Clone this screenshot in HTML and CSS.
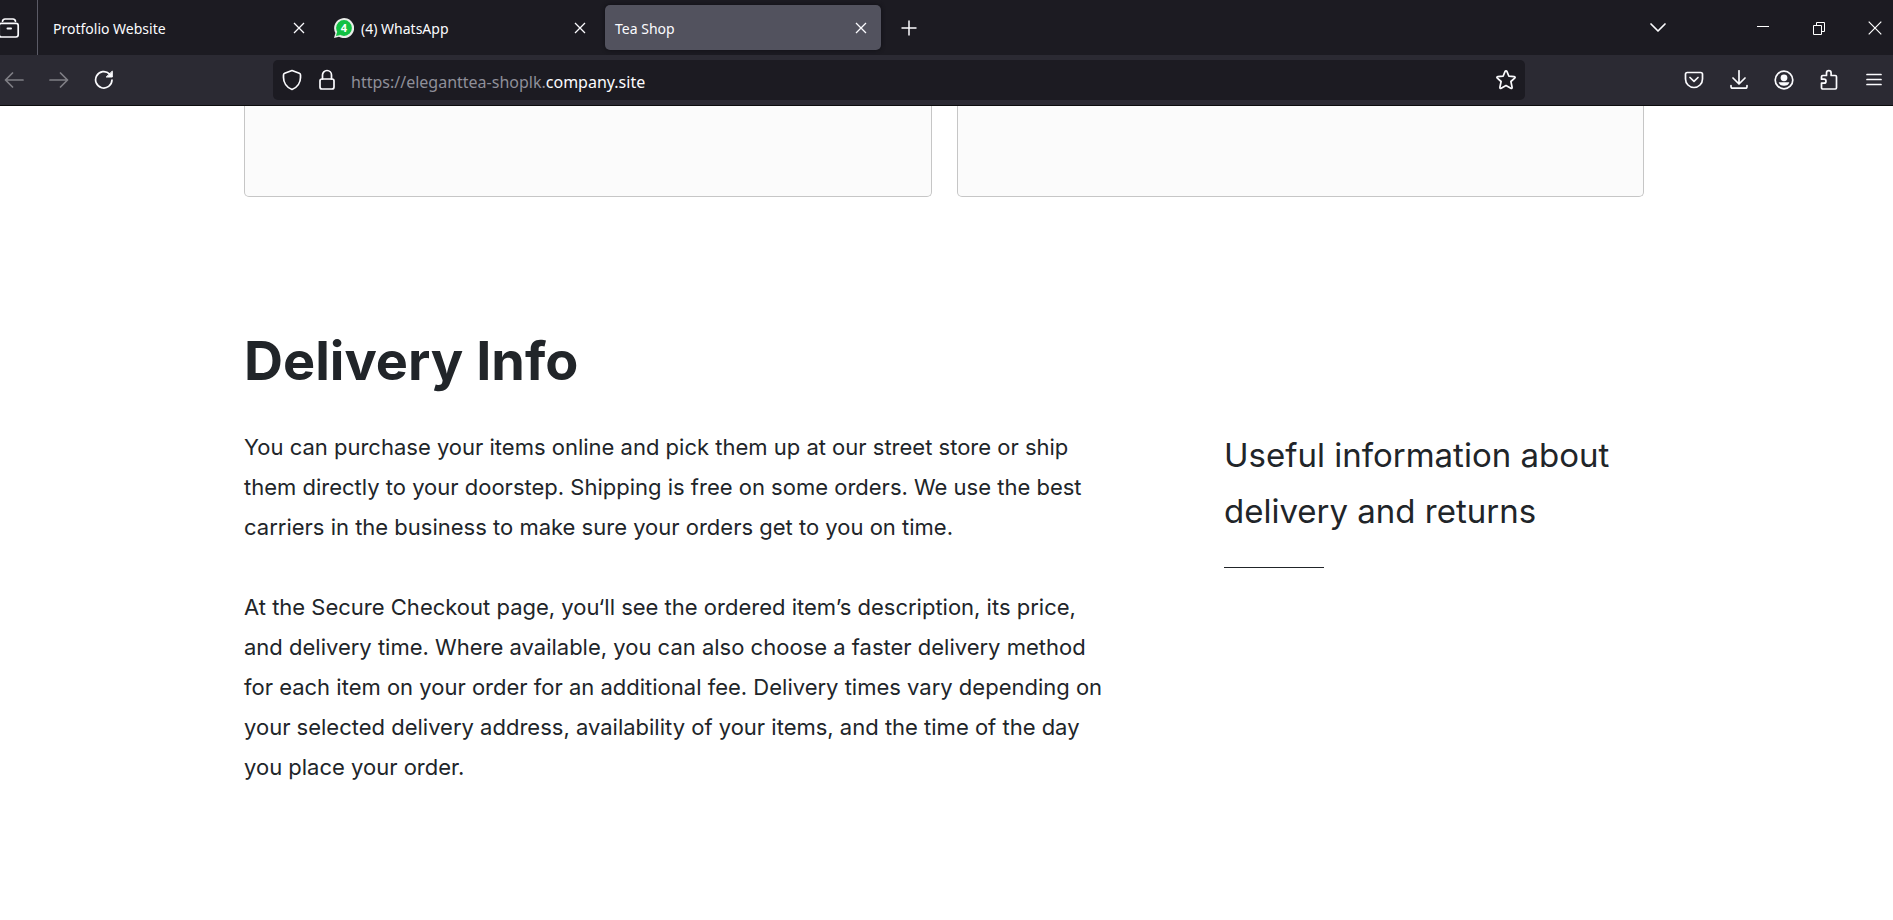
FILE: index.html
```html
<!DOCTYPE html>
<html lang="en">
<head>
<meta charset="utf-8">
<title>Tea Shop</title>
<link rel="stylesheet" href="styles.css">
</head>
<body>
<header class="browser">
  <div class="tabbar">
    <button class="view-button" aria-label="Recent browsing">
      <svg width="20" height="22" viewBox="0 0 20 22" fill="none" stroke="#fbfbfe" stroke-width="1.7" stroke-linecap="round"><path d="M2.500 4.200Q3 2 5 2H13Q15 2 15.500 4.200"/><rect x="-.8" y="6.300" width="19" height="13.700" rx="2.200"/><path d="M7.500 11.500H11" stroke-width="2"/></svg>
    </button>
    <div class="tabs">
      <div class="tab">
        <span class="tab-label">Protfolio Website</span>
        <button class="tab-close" aria-label="Close Protfolio Website"><svg width="12" height="12" viewBox="0 0 12 12"><path d="M1 1L11 11M11 1L1 11"/></svg></button>
      </div>
      <div class="tab">
        <svg class="favicon" width="20" height="20" viewBox="0 0 20 20"><path d="M0 20L1.400 15A10 10 0 1 1 5 18.700Z" fill="#e9ede9"/><circle cx="10" cy="10" r="7.900" fill="#12c143"/><path d="M2 18L3.200 13.500L6.500 17Z" fill="#12c143"/><text x="10" y="14" text-anchor="middle" class="favicon-count">4</text></svg>
        <span class="tab-label">(4) WhatsApp</span>
        <button class="tab-close" aria-label="Close WhatsApp"><svg width="12" height="12" viewBox="0 0 12 12"><path d="M1 1L11 11M11 1L1 11"/></svg></button>
      </div>
      <div class="tab tab-selected">
        <span class="tab-label">Tea Shop</span>
        <button class="tab-close" aria-label="Close Tea Shop"><svg width="12" height="12" viewBox="0 0 12 12"><path d="M1 1L11 11M11 1L1 11"/></svg></button>
      </div>
    </div>
    <button class="new-tab" aria-label="New tab"><svg width="16" height="16" viewBox="0 0 16 16" fill="none" stroke="#fbfbfe" stroke-width="1.500"><path d="M8 .5V15.500M.5 8H15.500"/></svg></button>
    <button class="window-button all-tabs" aria-label="List all tabs"><svg width="18" height="12" viewBox="0 0 18 12" fill="none" stroke="#fbfbfe" stroke-width="1.700" stroke-linecap="round" stroke-linejoin="round"><path d="M2 2L9 9L16 2"/></svg></button>
    <div class="window-buttons">
      <button class="window-button" aria-label="Minimize"><svg width="12" height="14" viewBox="0 0 12 14" fill="none" stroke="#fff"><path d="M0 5.500H12"/></svg></button>
      <button class="window-button" aria-label="Restore"><svg width="14" height="14" viewBox="0 0 14 14" fill="none" stroke="#fff"><path d="M1.500 4.500H9.500V13.500H1.500ZM4.500 4V1.500H12.500V10.500H10"/></svg></button>
      <button class="window-button" aria-label="Close window"><svg width="14" height="14" viewBox="0 0 14 14" fill="none" stroke="#fff" stroke-width="1.200"><path d="M.7 .7L13.300 13.300M13.300 .7L.7 13.300"/></svg></button>
    </div>
  </div>
  <div class="toolbar">
    <nav class="nav-buttons" aria-label="Navigation">
      <button class="tool" aria-label="Back" disabled><svg width="20" height="20" viewBox="0 0 20 20"><path d="M19 10H2M8.500 3L1.500 10L8.500 17"/></svg></button>
      <button class="tool" aria-label="Forward" disabled><svg width="20" height="20" viewBox="0 0 20 20"><path d="M1 10H18M11.500 3L18.500 10L11.500 17"/></svg></button>
      <button class="tool" aria-label="Reload"><svg width="20" height="20" viewBox="0 0 20 20"><path d="M18 10A8.200 8.200 0 1 1 15.500 3.900"/><path d="M18.300 1.500V7H12.600Z" fill="#fbfbfe" stroke-width="1"/></svg></button>
    </nav>
    <div class="urlbar">
      <button class="url-icon" aria-label="Tracking protection"><svg width="20" height="22" viewBox="0 0 20 22"><path d="M10 1.500L17.300 4.300Q18.500 4.800 18.500 6V8.500C18.500 13.500 15.500 18.500 10 20.500C4.500 18.500 1.500 13.500 1.500 8.500V6Q1.500 4.800 2.700 4.300Z"/></svg></button>
      <button class="url-icon" aria-label="Connection secure"><svg width="18" height="22" viewBox="0 0 18 22"><rect x="2" y="10" width="14" height="10" rx="2"/><path d="M4.500 10V6A4.500 4.500 0 0 1 13.500 6V10"/></svg></button>
      <div class="url" tabindex="0" role="textbox" aria-label="Address">https://eleganttea-shoplk.<span class="domain">company.site</span></div>
      <button class="url-icon" aria-label="Bookmark this page"><svg width="22" height="22" viewBox="0 0 22 22"><path d="M11 1.900Q11.700 1.900 12 2.600L13.900 7.200L19.200 7.700Q20.800 8 19.700 9.100L15.900 12.500L17.100 18.200Q17.200 19.900 15.800 19.300L11 16.500L6.200 19.300Q4.800 19.900 4.900 18.200L6.100 12.500L2.300 9.100Q1.200 8 2.800 7.700L8.100 7.200L10 2.600Q10.300 1.900 11 1.900Z"/></svg></button>
    </div>
    <div class="tools">
      <button class="tool" aria-label="Save to Pocket"><svg width="20" height="20" viewBox="0 0 20 20"><path d="M3.300 2.500H16.700Q18.500 2.500 18.500 4.300V9A8.500 8.500 0 0 1 1.500 9V4.300Q1.500 2.500 3.300 2.500ZM6 7.500L10 11.300L14 7.500"/></svg></button>
      <button class="tool" aria-label="Downloads"><svg width="20" height="20" viewBox="0 0 20 20"><path d="M10 .8V13.500M4 8L10 14L16 8M2 15.500V16.500Q2 18.200 3.700 18.200H16.300Q18 18.200 18 16.500V15.500"/></svg></button>
      <button class="tool" aria-label="Account"><svg width="20" height="20" viewBox="0 0 20 20"><circle cx="10" cy="10" r="8.800"/><circle cx="10" cy="7.800" r="3.400" fill="#fbfbfe" stroke="none"/><path d="M4.700 12.200H15.300Q14.500 15.800 10 15.800T4.700 12.200Z" fill="#fbfbfe" stroke="none"/></svg></button>
      <button class="tool" aria-label="Extensions"><svg width="20" height="22" viewBox="0 0 20 22"><path d="M3.800 6.500H7.500V3.900A2.300 2.300 0 0 1 12.100 3.900V6.500H16.300Q17.500 6.500 17.500 7.700V18.800Q17.500 20 16.300 20H3.800Q2.500 20 2.500 18.800V14.200H5A2 2 0 0 0 5 10.200H2.500V7.700Q2.500 6.500 3.800 6.500Z"/></svg></button>
      <button class="tool" aria-label="Menu"><svg width="16" height="14" viewBox="0 0 16 14"><path d="M1 1.500H15M1 6.500H15M1 11.500H15"/></svg></button>
    </div>
  </div>
</header>
<main class="page">
  <section class="cards" aria-label="Highlights">
    <div class="card"></div>
    <div class="card"></div>
  </section>
  <section class="delivery">
    <h1 class="title">Delivery Info</h1>
    <div class="columns">
      <div class="copy">
        <p>You can purchase your items online and pick them up at our street store or ship<br>them directly to your doorstep. Shipping is free on some orders. We use the best<br>carriers in the business to make sure your orders get to you on time.</p>
        <p>At the Secure Checkout page, you‘ll see the ordered item’s description, its price,<br>and delivery time. Where available, you can also choose a faster delivery method<br>for each item on your order for an additional fee. Delivery times vary depending on<br>your selected delivery address, availability of your items, and the time of the day<br>you place your order.</p>
      </div>
      <aside class="summary">
        <h2 class="subtitle">Useful information about<br>delivery and returns</h2>
        <hr class="rule">
      </aside>
    </div>
  </section>
</main>
</body>
</html>
```

FILE: styles.css
```css
* { box-sizing: border-box; }

body {
  margin: 0;
  background: #fff;
  color: #212529;
  font-family: Inter, "Liberation Sans", sans-serif;
  overflow-x: hidden;
}

button {
  display: flex;
  align-items: center;
  justify-content: center;
  flex: none;
  padding: 0;
  border: 0;
  background: none;
}

.browser {
  color: #fbfbfe;
  font-family: "Noto Sans", "Open Sans", sans-serif;
}

.tabbar {
  display: flex;
  align-items: center;
  height: 55px;
  background: #1c1b22;
}

.view-button {
  width: 38px;
  height: 55px;
  justify-content: flex-start;
  border-right: 1px solid #5b5b66;
}

.tabs {
  display: flex;
  gap: 5px;
  margin-left: 5px;
}

.tab {
  display: flex;
  align-items: center;
  gap: 7px;
  width: 276px;
  height: 45px;
  padding: 0 10px;
  border-radius: 5px;
  font-size: 14px;
}

.tab-selected {
  background: #52525e;
  box-shadow: 0 0 4px #0f0f14;
}

.tab-label {
  flex: 1;
  padding-top: 2px;
}

.favicon-count {
  fill: #fff;
  font-size: 11px;
  font-weight: 700;
}

.tab-close {
  width: 20px;
  height: 20px;
}

.tab-close svg {
  fill: none;
  stroke: #fbfbfe;
  stroke-width: 1.3;
}

.new-tab {
  width: 36px;
  height: 36px;
  margin-left: 10px;
}

.window-buttons {
  display: flex;
  gap: 20px;
}

.window-button {
  width: 36px;
  height: 36px;
}

.all-tabs {
  margin-left: auto;
  margin-right: 69px;
}

.toolbar {
  display: flex;
  align-items: center;
  height: 51px;
  border-bottom: 1px solid #0c0c0d;
  background: #2b2a33;
}

.nav-buttons, .tools {
  display: flex;
  gap: 7px;
}

.nav-buttons { margin-left: -5px; }

.tool {
  width: 38px;
  height: 38px;
}

.tool svg, .url-icon svg {
  fill: none;
  stroke: #fbfbfe;
  stroke-width: 1.7;
  stroke-linecap: round;
  stroke-linejoin: round;
}

.tool:disabled { opacity: 0.4; }

.urlbar {
  display: flex;
  flex: 1;
  align-items: center;
  height: 40px;
  margin: 0 150px;
  padding: 0 8px;
  border-radius: 5px;
  background: #1c1b22;
}

.url-icon {
  width: 22px;
  height: 30px;
  margin-right: 13px;
}

.url-icon:last-child { margin-right: 0; }

.url {
  flex: 1;
  padding-top: 4px;
  color: #8f8f99;
  font-size: 16px;
}

.domain { color: #fbfbfe; }

.page { padding: 0 249px 0 244px; }

.cards {
  display: grid;
  grid-template-columns: 1fr 1fr;
  gap: 25px;
}

.card {
  height: 91px;
  border: 1px solid #c6c6c6;
  border-top: 0;
  border-radius: 0 0 5px 5px;
  background: #fbfbfb;
}

.delivery { padding: 128px 0 120px; }

.title {
  margin: 0 0 30px;
  font-size: 54px;
  line-height: 72px;
  font-weight: 700;
}

.columns {
  display: grid;
  grid-template-columns: 7fr 3fr;
}

.copy {
  font-size: 22px;
  line-height: 40px;
  white-space: nowrap;
}

.copy p { margin: 0 0 40px; }

.subtitle {
  margin: 0;
  font-size: 33px;
  line-height: 56px;
  font-weight: 400;
  white-space: nowrap;
}

.rule {
  width: 100px;
  margin: 28px 0 0;
  border: 0;
  border-top: 1px solid #212529;
}
```
